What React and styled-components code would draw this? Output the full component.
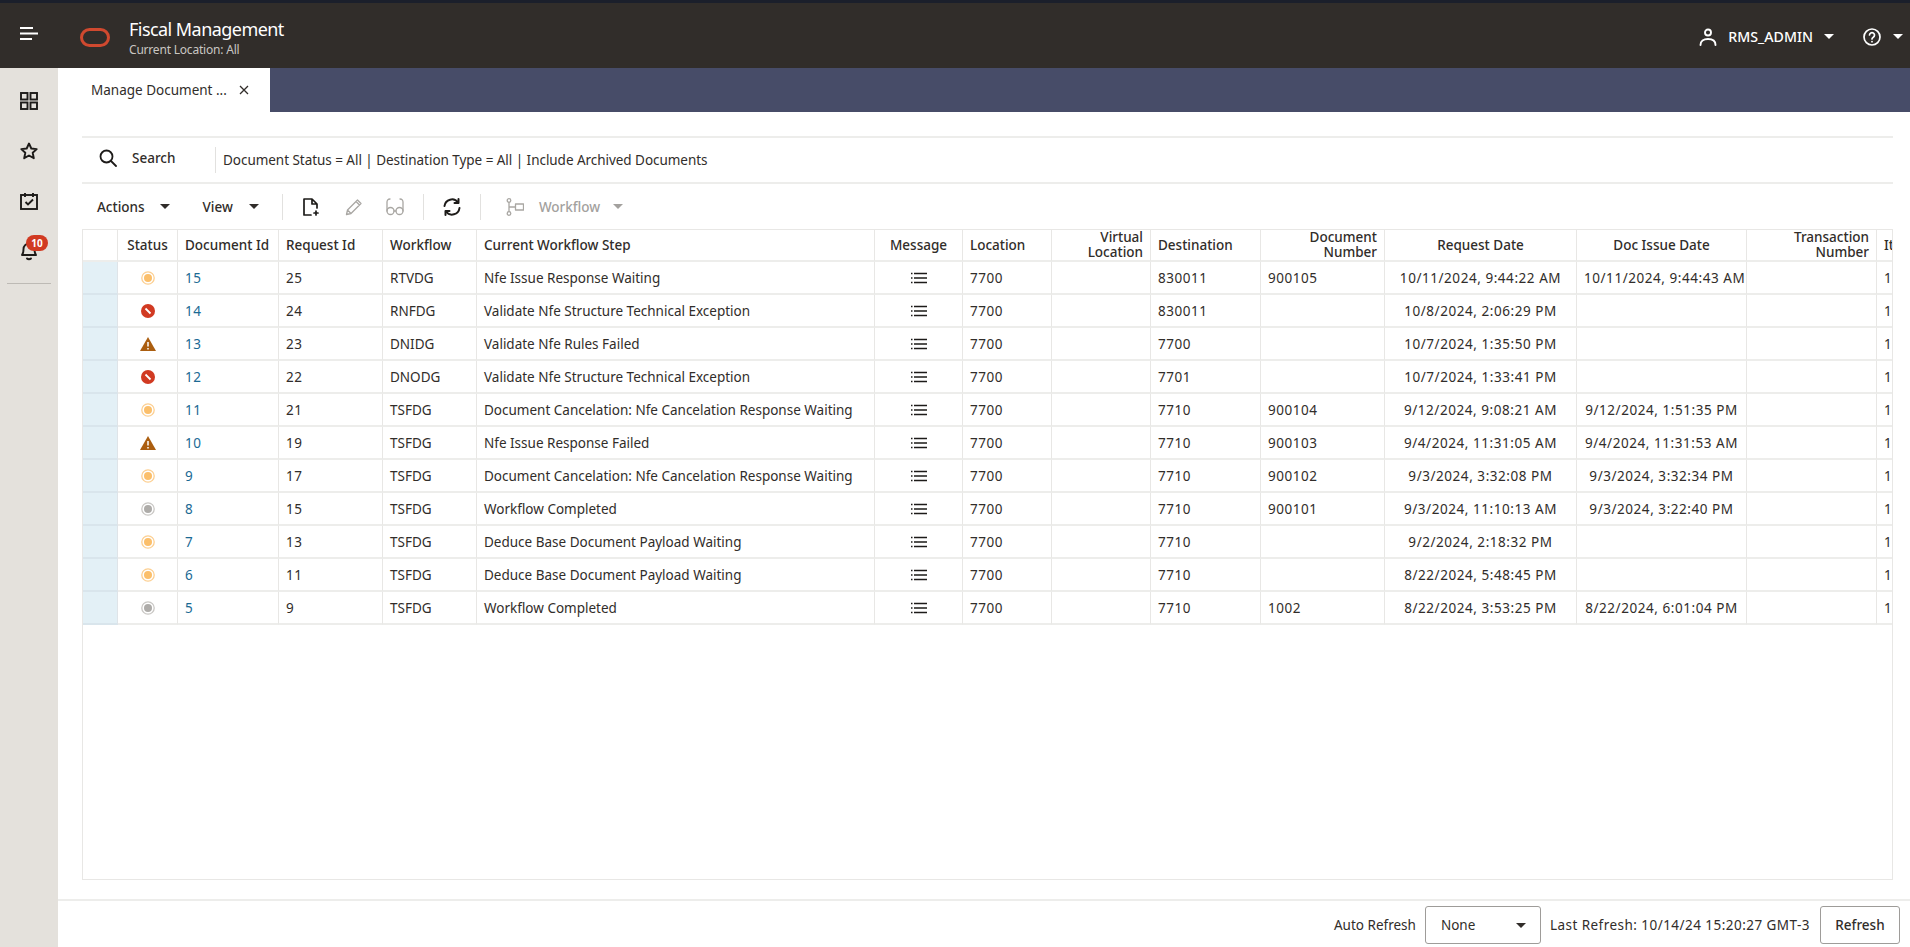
import React from "react";
import styled, { createGlobalStyle } from "styled-components";

const Global = createGlobalStyle`
  html, body { margin: 0; padding: 0; background: #fff; }
  body { font-family: "Noto Sans", "Open Sans", sans-serif; color: #312d2a; }
  * { box-sizing: border-box; }
`;

const Page = styled.div`
  width: 1910px; height: 947px; overflow: hidden;
  display: flex; flex-direction: column; background: #fff;
`;
const TopStrip = styled.div`height: 3px; background: #1b1f2b; flex: none;`;
const Header = styled.header`
  height: 65px; flex: none; background: #312d2a; color: #fff;
  display: flex; align-items: center; padding: 0 7px 0 20px;
`;
const Hamburger = styled.svg`width: 18px; height: 13px; margin: -5px 42px 0 0; flex: none;`;
const Logo = styled.svg`width: 30px; height: 19px; margin-right: 19px; margin-top: 4px; flex: none;`;
const TitleBlock = styled.div`display: flex; flex-direction: column; gap: 1px; flex: 1; margin-top: 3px;`;
const AppTitle = styled.div`font-size: 18px; line-height: 23px; letter-spacing: -0.55px;`;
const SubTitle = styled.div`font-size: 12px; line-height: 15px; color: #c9c6c2; letter-spacing: -0.2px;`;
const HeaderRight = styled.div`display: flex; align-items: center; margin-top: 2px;`;
const UserName = styled.span`font-size: 14.2px; font-weight: 500; margin: 0 11px 0 11px;`;
const HelpWrap = styled.span`margin: 0 12px 0 29px; display: flex;`;
const Caret = styled.span`
  display: inline-block; width: 0; height: 0; flex: none;
  border-left: 5.5px solid transparent; border-right: 5.5px solid transparent;
  border-top: 5.5px solid ${p => p.$color || "#312d2a"};
`;

const Body = styled.div`flex: 1; display: flex; min-height: 0;`;
const Sidebar = styled.nav`
  width: 58px; flex: none; background: #e4e1dc; color: #1d1b19;
  display: flex; flex-direction: column; align-items: center; padding-top: 24px;
`;
const SideItem = styled.div`
  height: ${p => p.$h || 50}px; width: 100%; display: flex; justify-content: center; align-items: flex-start;
  position: relative;
`;
const Badge = styled.span`
  position: absolute; left: 26px; top: -6px; width: 22px; height: 16px; border-radius: 8px;
  background: #d13a22; color: #fff; font-size: 10px; font-weight: 700;
  display: flex; align-items: center; justify-content: center;
`;
const SideRule = styled.div`width: 44px; height: 1px; background: #bdbab5; margin-top: -8px;`;

const Main = styled.main`flex: 1; min-width: 0; display: flex; flex-direction: column;`;
const TabBar = styled.div`height: 44px; flex: none; background: #474c68; display: flex;`;
const Tab = styled.div`
  width: 212px; background: #fff; display: flex; align-items: center;
  padding: 0 21px 0 33px; justify-content: space-between; font-size: 13.5px;
`;
const Content = styled.div`
  flex: 1; min-height: 0; margin: 24px 17px 0 24px; display: flex; flex-direction: column;
`;
const SearchRow = styled.div`
  height: 48px; flex: none; display: flex; align-items: center;
  border-top: 2px solid #ededeb; border-bottom: 2px solid #ededeb; padding-left: 17px;
`;
const SearchIconSlot = styled.span`display: flex; margin-top: -5px;`;
const SearchLabel = styled.span`
  font-size: 13.5px; font-weight: 500; width: 98px; padding-left: 15px; margin-top: -5px;
`;
const VRule = styled.span`width: 1px; height: ${p => p.$h || 26}px; background: #e2e1df; flex: none;`;
const FilterText = styled.span`font-size: 13.5px; margin-left: 7px; letter-spacing: -0.04px;`;

const Toolbar = styled.div`height: 45px; flex: none; display: flex; align-items: center; padding-left: 15px;`;
const MenuButton = styled.div`
  display: flex; align-items: center; font-size: 13.5px; font-weight: 500;
  color: ${p => (p.$off ? "#a3a19e" : "#312d2a")};
  margin-right: ${p => p.$mr || 0}px;
`;
const MenuLabel = styled.span`margin-right: ${p => p.$gap || 0}px;`;
const IconSlot = styled.span`display: flex; margin: ${p => p.$m || "0"};`;

const TableWrap = styled.div`
  flex: 1; min-height: 0; border: 1px solid #e8e7e5; overflow: hidden;
`;
const Table = styled.table`
  border-collapse: separate; border-spacing: 0; table-layout: fixed; width: 1862px;
  font-size: 13.5px;
`;
const Th = styled.th`
  height: 32px; padding: 0 7px; font-weight: 500; font-size: 13.5px; line-height: 15px;
  white-space: normal; text-align: ${p => p.$a || "left"};
  border-right: 1px solid #e8e7e5; border-bottom: 2px solid #ededeb;
`;
const Td = styled.td`
  height: 33px; padding: 0 7px; white-space: nowrap; overflow: hidden;
  text-align: ${p => p.$a || "left"};
  border-right: 1px solid #e8e7e5; border-bottom: 2px solid #ededeb;
  vertical-align: middle;
`;
const NumTd = styled(Td)`letter-spacing: 0.55px;`;
const RowHead = styled.td`
  background: #e3f0f6; border-right: 1px solid #dfe4e8; border-bottom: 2px solid #d9e5ec; height: 33px; padding: 0;
`;
const DocLink = styled.span`color: #1b6a94;`;
const Center = styled.span`display: flex; justify-content: center; align-items: center;`;

const Footer = styled.footer`
  flex: none; height: 48px; margin-top: 19px; border-top: 2px solid #ededeb;
  display: flex; align-items: center; justify-content: flex-end; padding: 2px 10px 0 0;
  font-size: 13.5px;
`;
const SelectBox = styled.div`
  width: 116px; height: 38px; border: 1px solid #9e9c99; border-radius: 3px;
  display: flex; align-items: center; justify-content: space-between; padding: 0 14px 0 15px;
  margin: 0 9px 0 9px;
`;
const LastRefresh = styled.span`letter-spacing: 0.46px;`;
const RefreshBtn = styled.button`
  width: 80px; height: 38px; border: 1px solid #9e9c99; border-radius: 3px; background: #fff;
  font: inherit; font-weight: 500; color: #312d2a; margin-left: 10px; padding: 0;
`;

const S = { fill: "none", stroke: "currentColor", strokeWidth: 1.9, strokeLinecap: "round", strokeLinejoin: "round" };

const GridIcon = () => <svg width="18" height="18" viewBox="0 0 18 18" {...S} strokeLinecap="butt" strokeLinejoin="miter"><rect x="1" y="1" width="6.500" height="6.500"/><rect x="10.500" y="1" width="6.500" height="6.500"/><rect x="1" y="10.500" width="6.500" height="6.500"/><rect x="10.500" y="10.500" width="6.500" height="6.500"/></svg>;
const StarIcon = () => <svg width="18" height="18" viewBox="0 0 18 18" {...S}><path d="M9 1.500l2.300 5 5.400.6-4 3.700 1.100 5.400L9 13.500l-4.800 2.700 1.100-5.400-4-3.700 5.400-.6z"/></svg>;
const CalIcon = () => <svg width="18" height="18" viewBox="0 0 18 18" {...S} strokeLinecap="butt" strokeLinejoin="miter"><rect x="1" y="3" width="16" height="14"/><path d="M5 1v4M13 1v4M5.500 10l2.500 2.500 5-5"/></svg>;
const BellIcon = () => <svg width="18" height="20" viewBox="0 0 18 20" {...S}><path d="M2 14c1.500-1.500 1.500-3 1.500-6a5.500 5.500 0 0 1 11 0c0 3 0 4.500 1.500 6z"/><path d="M7 17.500c1 1 3 1 4 0"/></svg>;
const SearchIcon = () => <svg width="18" height="18" viewBox="0 0 18 18" {...S} strokeWidth="1.800" style={{ color: "#1d1b19" }}><circle cx="7.500" cy="7.500" r="6"/><path d="M12 12l5 5"/></svg>;
const UserIcon = () => <svg width="18" height="18" viewBox="0 0 18 18" {...S} strokeWidth="1.900"><circle cx="9" cy="4.500" r="3"/><path d="M1.500 17c0-4 3-6 7.500-6s7.500 2 7.500 6"/></svg>;
const HelpIcon = () => <svg width="18" height="18" viewBox="0 0 18 18" {...S} strokeWidth="1.700"><circle cx="9" cy="9" r="8"/><path d="M6.500 7a2.500 2.500 0 1 1 3.800 2.200C9.400 9.800 9 10.200 9 11"/><path d="M9 13.600v.1" strokeWidth="1.800"/></svg>;
const NewDocIcon = () => <svg width="16" height="18" viewBox="0 0 16 18" {...S} strokeWidth="1.700" style={{ color: "#1d1b19" }}><path d="M8 17H1V1h8l5 5v4M9 1v5h5"/><path d="M13 13v4M11 15h4"/></svg>;
const PencilIcon = () => <svg width="18" height="18" viewBox="0 0 18 18" {...S} strokeWidth="1.300" style={{ color: "#a9a7a3" }}><path d="M1.500 16.500l1-4.500L12.500 2l3.500 3.500-10 10zM2.500 12l3.500 3.500M11 3.500L14.500 7"/></svg>;
const GlassesIcon = () => <svg width="18" height="18" viewBox="0 0 18 18" {...S} strokeWidth="1.300" style={{ color: "#a9a7a3" }}><circle cx="4.500" cy="13" r="3.500"/><circle cx="13.500" cy="13" r="3.500"/><path d="M8 13h2M1 13V4c0-1.500 1-3 3-3M17 13V4c0-1.500-1-3-3-3"/></svg>;
const RefreshIcon = () => <svg width="18" height="18" viewBox="0 0 18 18" {...S} strokeWidth="2" style={{ color: "#1d1b19" }}><path d="M1.500 8a7.500 7.500 0 0 1 13.500-3.500M16.500 10A7.500 7.500 0 0 1 3 13.500"/><path d="M15.500 1v4h-4M2.500 17v-4h4"/></svg>;
const FlowIcon = () => <svg width="18" height="18" viewBox="0 0 18 18" {...S} strokeWidth="1.300" style={{ color: "#a9a7a3" }}><circle cx="3" cy="2.500" r="1.800"/><circle cx="3" cy="15.500" r="1.800"/><path d="M3 4.300v9.400M3 9h6"/><rect x="9.500" y="6" width="8" height="6"/></svg>;
const ListIcon = () => <svg width="16" height="12" viewBox="0 0 16 12" fill="none" stroke="#1d1b19" strokeWidth="1.400"><path d="M3 1.500h13M3 6h13M3 10.500h13"/><path d="M0 1.500h1.500M0 6h1.500M0 10.500h1.500"/></svg>;
const CloseIcon = () => <svg width="10" height="10" viewBox="0 0 10 10" stroke="#312d2a" strokeWidth="1.300"><path d="M1 1l8 8M9 1l-8 8"/></svg>;

const StatusIcon = ({ kind }) => {
  if (kind === "wait") return <svg width="14" height="14" viewBox="0 0 14 14"><circle cx="7" cy="7" r="6.200" fill="none" stroke="#fccf91" strokeWidth="1.300"/><circle cx="7" cy="7" r="4" fill="#fbbf6b"/></svg>;
  if (kind === "done") return <svg width="14" height="14" viewBox="0 0 14 14"><circle cx="7" cy="7" r="6.200" fill="none" stroke="#c9c7c4" strokeWidth="1.300"/><circle cx="7" cy="7" r="4" fill="#aeaca9"/></svg>;
  if (kind === "err") return <svg width="14" height="14" viewBox="0 0 14 14"><circle cx="7" cy="7" r="7" fill="#d13a22"/><path d="M4.500 4.500l5 5" stroke="#fff" strokeWidth="1.800"/></svg>;
  return <svg width="16" height="14" viewBox="0 0 16 14"><path d="M8 0l8 14H0z" fill="#ab5e10"/><path d="M8 5v4.500M8 11v1.500" stroke="#fff" strokeWidth="1.500"/></svg>;
};

const cols = [35, 60, 101, 104, 94, 398, 88, 89, 99, 110, 124, 192, 170, 130, 80];
const heads = [
  ["", "left"], ["Status", "center"], ["Document Id", "left"], ["Request Id", "left"], ["Workflow", "left"],
  ["Current Workflow Step", "left"], ["Message", "center"], ["Location", "left"], ["Virtual Location", "right"],
  ["Destination", "left"], ["Document Number", "right"], ["Request Date", "center"], ["Doc Issue Date", "center"],
  ["Transaction Number", "right"], ["Items", "left"],
];
const rows = [
  ["wait", 15, 25, "RTVDG", "Nfe Issue Response Waiting", "830011", "900105", "10/11/2024, 9:44:22 AM", "10/11/2024, 9:44:43 AM"],
  ["err", 14, 24, "RNFDG", "Validate Nfe Structure Technical Exception", "830011", "", "10/8/2024, 2:06:29 PM", ""],
  ["warn", 13, 23, "DNIDG", "Validate Nfe Rules Failed", "7700", "", "10/7/2024, 1:35:50 PM", ""],
  ["err", 12, 22, "DNODG", "Validate Nfe Structure Technical Exception", "7701", "", "10/7/2024, 1:33:41 PM", ""],
  ["wait", 11, 21, "TSFDG", "Document Cancelation: Nfe Cancelation Response Waiting", "7710", "900104", "9/12/2024, 9:08:21 AM", "9/12/2024, 1:51:35 PM"],
  ["warn", 10, 19, "TSFDG", "Nfe Issue Response Failed", "7710", "900103", "9/4/2024, 11:31:05 AM", "9/4/2024, 11:31:53 AM"],
  ["wait", 9, 17, "TSFDG", "Document Cancelation: Nfe Cancelation Response Waiting", "7710", "900102", "9/3/2024, 3:32:08 PM", "9/3/2024, 3:32:34 PM"],
  ["done", 8, 15, "TSFDG", "Workflow Completed", "7710", "900101", "9/3/2024, 11:10:13 AM", "9/3/2024, 3:22:40 PM"],
  ["wait", 7, 13, "TSFDG", "Deduce Base Document Payload Waiting", "7710", "", "9/2/2024, 2:18:32 PM", ""],
  ["wait", 6, 11, "TSFDG", "Deduce Base Document Payload Waiting", "7710", "", "8/22/2024, 5:48:45 PM", ""],
  ["done", 5, 9, "TSFDG", "Workflow Completed", "7710", "1002", "8/22/2024, 3:53:25 PM", "8/22/2024, 6:01:04 PM"],
];

export default function App() {
  return (
    <Page>
      <Global />
      <TopStrip />
      <Header>
        <Hamburger viewBox="0 0 18 13" fill="none" stroke="#fff" strokeWidth="2"><path d="M0 1h13M0 6.500h18M0 12h12"/></Hamburger>
        <Logo viewBox="0 0 30 19" fill="none"><rect x="1.500" y="1.500" width="27" height="16" rx="8" stroke="#d0492f" strokeWidth="3"/></Logo>
        <TitleBlock>
          <AppTitle>Fiscal Management</AppTitle>
          <SubTitle>Current Location: All</SubTitle>
        </TitleBlock>
        <HeaderRight>
          <UserIcon />
          <UserName>RMS_ADMIN</UserName>
          <Caret $color="#fff" />
          <HelpWrap><HelpIcon /></HelpWrap>
          <Caret $color="#fff" />
        </HeaderRight>
      </Header>
      <Body>
        <Sidebar>
          <SideItem><GridIcon /></SideItem>
          <SideItem><StarIcon /></SideItem>
          <SideItem $h={49}><CalIcon /></SideItem>
          <SideItem><BellIcon /><Badge>10</Badge></SideItem>
          <SideRule />
        </Sidebar>
        <Main>
          <TabBar>
            <Tab>Manage Document ...<CloseIcon /></Tab>
          </TabBar>
          <Content>
            <SearchRow>
              <SearchIconSlot><SearchIcon /></SearchIconSlot>
              <SearchLabel>Search</SearchLabel>
              <VRule />
              <FilterText>Document Status = All | Destination Type = All | Include Archived Documents</FilterText>
            </SearchRow>
            <Toolbar>
              <MenuButton $mr={33}><MenuLabel $gap={15}>Actions</MenuLabel><Caret /></MenuButton>
              <MenuButton $mr={23}><MenuLabel $gap={16}>View</MenuLabel><Caret /></MenuButton>
              <VRule />
              <IconSlot $m="0 26px 0 20px"><NewDocIcon /></IconSlot>
              <IconSlot $m="0 23px 0 0"><PencilIcon /></IconSlot>
              <IconSlot $m="0 19px 0 0"><GlassesIcon /></IconSlot>
              <VRule />
              <IconSlot $m="0 19px"><RefreshIcon /></IconSlot>
              <VRule />
              <IconSlot $m="0 15px 0 25px"><FlowIcon /></IconSlot>
              <MenuButton $off><MenuLabel $gap={13}>Workflow</MenuLabel><Caret $color="#a3a19e" /></MenuButton>
            </Toolbar>
            <TableWrap>
              <Table>
                <colgroup>{cols.map((w, i) => <col key={i} style={{ width: w }} />)}</colgroup>
                <thead>
                  <tr>{heads.map(([h, a], i) => <Th key={i} $a={a}>{h}</Th>)}</tr>
                </thead>
                <tbody>
                  {rows.map(r => (
                    <tr key={r[1]}>
                      <RowHead />
                      <Td><Center><StatusIcon kind={r[0]} /></Center></Td>
                      <NumTd><DocLink>{r[1]}</DocLink></NumTd>
                      <NumTd>{r[2]}</NumTd>
                      <Td>{r[3]}</Td>
                      <Td>{r[4]}</Td>
                      <Td><Center><ListIcon /></Center></Td>
                      <NumTd>7700</NumTd>
                      <Td />
                      <NumTd>{r[5]}</NumTd>
                      <NumTd>{r[6]}</NumTd>
                      <NumTd $a="center">{r[7]}</NumTd>
                      <NumTd $a="center">{r[8]}</NumTd>
                      <Td />
                      <NumTd>1</NumTd>
                    </tr>
                  ))}
                </tbody>
              </Table>
            </TableWrap>
          </Content>
          <Footer>
            <span>Auto Refresh</span>
            <SelectBox><span>None</span><Caret /></SelectBox>
            <LastRefresh>Last Refresh: 10/14/24 15:20:27 GMT-3</LastRefresh>
            <RefreshBtn>Refresh</RefreshBtn>
          </Footer>
        </Main>
      </Body>
    </Page>
  );
}
